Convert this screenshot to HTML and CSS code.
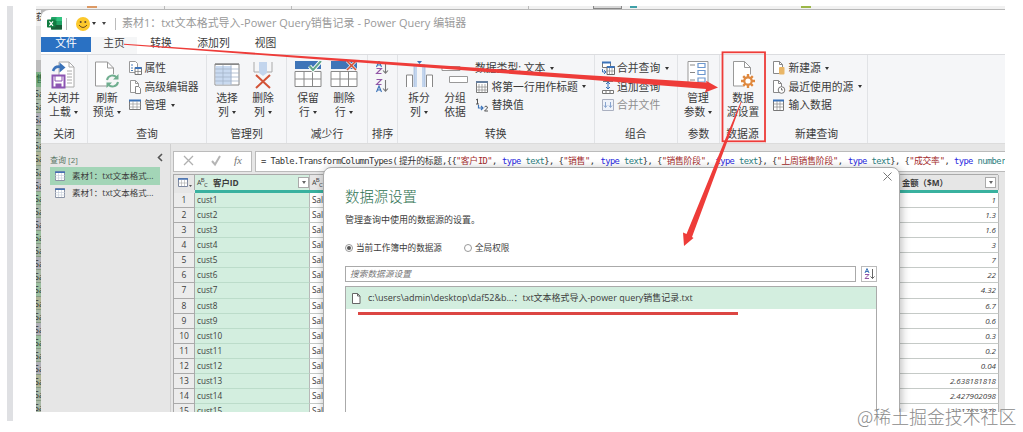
FILE: index.html
```html
<!DOCTYPE html>
<html>
<head>
<meta charset="utf-8">
<title>Power Query 编辑器</title>
<link rel="stylesheet" href="styles.css">
</head>
<body>
<div class="page">
<div class="quote-bar"></div>
<div class="shot">
  <div class="backdrop-top"><i class="tick t1"></i><i class="tick t2"></i><i class="tick t3"></i><i class="tick t4"></i><i class="tick t5"></i><i class="tick t6"></i><i class="tick t7"></i></div>
  <div class="lower">
  <div class="backdrop-left">
    <div class="bl-head">获</div><div class="bl-gap"></div><div class="bl-sel">售</div>
    <div class="cell">Sa</div><div class="cell">Sa</div><div class="cell a">Sa</div><div class="cell">Sa</div><div class="cell">Sa</div><div class="cell b">Sa</div><div class="cell">Sa</div><div class="cell a">Sa</div><div class="cell c">Sa</div><div class="cell">Sa</div><div class="cell a">Sa</div><div class="cell c">Sa</div><div class="cell">Sa</div><div class="cell a">Sa</div><div class="cell">Sa</div><div class="cell c">Sa</div><div class="cell b">Sa</div><div class="cell">Sa</div><div class="cell a">Sa</div><div class="cell c">Sa</div><div class="cell">Sa</div><div class="cell a">Sa</div><div class="cell b">Sa</div><div class="cell">Sa</div><div class="cell">Sa</div>
  </div>
  <div class="window">
    <div class="titlebar">
      <svg class="xl" width="15" height="14" viewBox="0 0 15 14"><rect x="4" y="0" width="11" height="12.5" rx="1" fill="#21a366"/><rect x="9.5" y="0" width="5.5" height="4" fill="#33c481"/><rect x="4" y="8" width="11" height="4.5" fill="#185c37"/><rect x="4" y="4" width="5.5" height="4" fill="#107c41"/><rect x="0" y="2.5" width="8.5" height="8" rx=".8" fill="#107c41"/><path d="M2.4 4.3l3.6 4.6M6 4.3L2.4 8.900" stroke="#fff" stroke-width="1.2"/></svg>
      <i class="bar"></i>
      <svg class="smile" width="14" height="14" viewBox="0 0 14 14"><circle cx="7" cy="7" r="7" fill="#fcc82b"/><circle cx="4.700" cy="5" r="1" fill="#5a4632"/><circle cx="9.300" cy="5" r="1" fill="#5a4632"/><path d="M3 8Q7 13 11 8" fill="none" stroke="#6b4b20" stroke-width="1"/></svg>
      <i class="caret"></i><i class="caret under"></i><i class="bar second"></i>
      <span class="title">素材1：txt文本格式导入-Power Query销售记录 - Power Query 编辑器</span>
    </div>
    <div class="tabs"><span class="tab file">文件</span><span class="tab active">主页</span><span class="tab w57">转换</span><span class="tab w50">添加列</span><span class="tab w55">视图</span></div>
    <div class="ribbon">
      <div class="group g-close"><div class="body">
        <div class="big"><svg width="26" height="28" viewBox="0 0 26 28"><path d="M8 1h10l5 5v20H8z" fill="#fff" stroke="#aaa"/><path d="M18 1v5h5M16 10h5M16 13h5M16 16h5M16 19h5M16 22h5" fill="none" stroke="#aaa"/><path d="M2 10Q4 4.500 10 6" fill="none" stroke="#3b73b9" stroke-width="2.600"/><path d="M8.500 1.500l6 5-6 5z" fill="#3b73b9"/><path d="M1.500 14.500h12v12h-12z" fill="#fff" stroke="#8c55b2" stroke-width="2"/><path d="M4 15h7v5H4z" fill="#fff" stroke="#8c55b2"/><path d="M4.500 22.500h6v4h-6z" fill="#8c55b2"/></svg><span>关闭并</span><span>上载<i class="caret"></i></span></div>
      </div><div class="label">关闭</div></div>
      <div class="group g-query"><div class="body">
        <div class="big"><svg width="26" height="28" viewBox="0 0 26 28"><path d="M1.500 1h12l6 6v18h-18z" fill="#fff" stroke="#999"/><path d="M13.500 1v6h6" fill="none" stroke="#999"/><circle cx="18.500" cy="20" r="7" fill="#f5f6f7"/><path d="M13 19a5.500 5.500 0 0 1 10-2M24 21a5.500 5.500 0 0 1-10 2" fill="none" stroke="#6fae8f" stroke-width="2"/><path d="M24.500 13v5.500h-5.500zM12.500 27v-5.500H18z" fill="#6fae8f"/></svg><span>刷新</span><span>预览<i class="caret"></i></span></div>
        <div class="smalls">
          <div class="small"><svg width="14" height="14" viewBox="0 0 14 14"><path d="M1.500.5h6l2 2v9h-8z" fill="#fff" stroke="#999"/><path d="M3 4h2M3 7h2M3 9.500h2" stroke="#4c7fba"/><path d="M7 6.500h6.500v7H7z" fill="#fff" stroke="#777"/><path d="M7 7h6.500" stroke="#3b73b9" stroke-width="2"/><path d="M7 10.500h6.500M10 8v5" stroke="#777" stroke-width=".7"/></svg>属性</div>
          <div class="small"><svg width="14" height="14" viewBox="0 0 14 14"><path d="M2.500.5h5l3 3v9h-8z" fill="#fff" stroke="#999"/><path d="M7.500.5v3h3" fill="none" stroke="#999"/><path d="M7.500 6.500h3l2 2v5h-5z" fill="#fff" stroke="#888"/></svg>高级编辑器</div>
          <div class="small"><svg width="14" height="14" viewBox="0 0 14 14"><path d="M1.500 2.500h11v9h-11z" fill="#fff" stroke="#777"/><path d="M1 2.500h12" stroke="#3b73b9" stroke-width="2"/><path d="M5 3v8M9 3v8M1 6h12M1 9h12" stroke="#999" stroke-width=".7"/></svg>管理<i class="caret"></i></div>
        </div>
      </div><div class="label">查询</div></div>
      <div class="group g-cols"><div class="body">
        <div class="big"><svg width="26" height="28" viewBox="0 0 26 28"><path d="M1 3h24v21H1z" fill="#fff" stroke="#888"/><path d="M1.500 5h16v18.500h-16z" fill="#c9daf0"/><path d="M1 3.200h24" stroke="#888" stroke-width="1.500"/><path d="M9 4v20M17 4v20M1 8h24M1 12h24M1 16h24M1 20h24" stroke="#a4b4c8" stroke-width=".8"/></svg><span>选择</span><span>列<i class="caret"></i></span></div>
        <div class="big"><svg width="26" height="28" viewBox="0 0 26 28"><path d="M4 1v10h5M22 1v10h-5" fill="none" stroke="#aaa"/><path d="M9 1h8v11l-4 3-4-3z" fill="#c3d5ed"/><path d="M6 14l14 13M20 14L6 27" stroke="#d35438" stroke-width="2"/></svg><span>删除</span><span>列<i class="caret"></i></span></div>
      </div><div class="label">管理列</div></div>
      <div class="group g-rows"><div class="body">
        <div class="big"><svg width="28" height="28" viewBox="0 0 28 28"><path d="M1 0h26v8H1z" fill="#3f75b8"/><path d="M1 10.500h26v15H1zM1 18h26M10 10.500v15M18.500 10.500v15" fill="#fff" stroke="#888"/><path d="M15.500 5l3.500 4L27 0" fill="none" stroke="#fff" stroke-width="4"/><path d="M15.500 5l3.500 4L27 0" fill="none" stroke="#63a88a" stroke-width="2"/></svg><span>保留</span><span>行<i class="caret"></i></span></div>
        <div class="big"><svg width="28" height="28" viewBox="0 0 28 28"><path d="M1 0h26v8H1z" fill="#3f75b8"/><path d="M1 10.500h26v15H1zM1 18h26M10 10.500v15M18.500 10.500v15" fill="#fff" stroke="#888"/><path d="M17 0l9 9M26 0l-9 9" stroke="#edf1f6" stroke-width="3"/><path d="M17 0l9 9M26 0l-9 9" stroke="#d35438" stroke-width="1.600"/></svg><span>删除</span><span>行<i class="caret"></i></span></div>
      </div><div class="label">减少行</div></div>
      <div class="group g-sort"><div class="body">
        <svg width="14" height="34" viewBox="0 0 14 34" fill="none"><g stroke-width="1.100"><path d="M1.500 6L4 0l2.500 6M2.300 4h3.400" stroke="#3b73b9"/><path d="M1.500 7.500h5l-5 5h5" stroke="#9256a6"/><path d="M1.500 18.500h5l-5 5h5" stroke="#9256a6"/><path d="M1.500 31L4 25l2.500 6M2.300 29h3.400" stroke="#3b73b9"/><path d="M10.500 1v11M8 9.500l2.500 2.700L13 9.500M10.500 19v11M8 27.500l2.500 2.700 2.500-2.700" stroke="#777"/></g></svg>
      </div><div class="label">排序</div></div>
      <div class="group g-trans"><div class="body">
        <div class="big"><svg width="28" height="28" viewBox="0 0 28 28"><path d="M9 3h3v23H9zM17 3h3v23h-3z" fill="#c3d5ed"/><path d="M1.500 26V14h6v12M21.500 26V14h6v12" fill="#fff" stroke="#888"/><path d="M9 4v22M20 4v22" stroke="#9bb6da" stroke-width=".7"/><path d="M12 0h5l-2.500 3z" fill="#3b73b9"/></svg><span>拆分</span><span>列<i class="caret"></i></span></div>
        <div class="big"><svg width="28" height="28" viewBox="0 0 28 28"><path d="M1 5.500h18v4H1zM8.500 15.500h18v6h-18z" fill="#fff" stroke="#999"/></svg><span>分组</span><span>依据</span></div>
        <div class="smalls">
          <div class="small plain">数据类型: 文本<i class="caret"></i></div>
          <div class="small"><svg width="14" height="14" viewBox="0 0 14 14"><path d="M1.500 1.500h11v11h-11z" fill="#fff" stroke="#777"/><path d="M1 2h12" stroke="#667f9f" stroke-width="2"/><path d="M4 4v9M7 4v9M10 4v9M1 7h12M1 10h12" stroke="#888" stroke-width=".7"/></svg>将第一行用作标题<i class="caret"></i></div>
          <div class="small"><svg width="14" height="14" viewBox="0 0 14 14" fill="none"><path d="M1 2l1.500-1v5M1 6h3" stroke="#555"/><path d="M3.500 7v3h4M6 8l2 2-2 2" stroke="#3b73b9" stroke-width="1.200"/><path d="M9.500 9q1.500-2 3 0 0 1.500-3 4h3.500" stroke="#555"/></svg>替换值</div>
        </div>
      </div><div class="label">转换</div></div>
      <div class="group g-comb"><div class="body"><div class="smalls">
          <div class="small"><svg width="14" height="14" viewBox="0 0 14 14"><path d="M1.500 1.500h8v5h-8z" fill="#fff" stroke="#777"/><path d="M1 1.500h9" stroke="#3b73b9" stroke-width="2"/><path d="M6 5.500h7.500v8H6z" fill="#fff" stroke="#666"/><path d="M6 6h7.500" stroke="#3b73b9" stroke-width="2"/><path d="M8.500 7v6M11 7v6M6 10h7" stroke="#888" stroke-width=".7"/><path d="M1.500 8v3h3M3 9l2 2-2 2" fill="none" stroke="#3b73b9"/></svg>合并查询<i class="caret"></i></div>
          <div class="small"><svg width="14" height="14" viewBox="0 0 14 14"><path d="M2 1.500h10M1.500 10.500h11v3h-11zM5 10v3M9 10v3" fill="#fff" stroke="#777"/><path d="M7 2v7M5 4l2-2 2 2M5 7l2 2 2-2" fill="none" stroke="#3b73b9"/></svg>追加查询</div>
          <div class="small disabled"><svg width="14" height="14" viewBox="0 0 14 14"><path d="M1.500 1.500h11v11h-11z" fill="#eef2fa" stroke="#aab0c0"/><path d="M4.500 4v5M9.500 4v5M3 7.500l1.500 2L6 7.500M8 7.500l1.500 2 1.500-2" fill="none" stroke="#87a4cf"/></svg>合并文件</div>
      </div></div><div class="label">组合</div></div>
      <div class="group g-param"><div class="body">
        <div class="big"><svg width="22" height="28" viewBox="0 0 22 28"><path d="M1 .5h20v24H1z" fill="#fff" stroke="#999"/><path d="M3 4h5M3 11.500h5M3 19h5" stroke="#888"/><path d="M11 2.500h7v4h-7zM11 9.500h7v4h-7zM11 17h7v4h-7z" fill="#fff" stroke="#6d98cf" stroke-width="1.200"/></svg><span>管理</span><span>参数<i class="caret"></i></span></div>
      </div><div class="label">参数</div></div>
      <div class="group g-source"><div class="body">
        <div class="big"><svg width="24" height="28" viewBox="0 0 24 28"><path d="M2.500.5h11l6 6V25h-17z" fill="#fff" stroke="#999"/><path d="M13.500.5v6h6" fill="none" stroke="#999"/><circle cx="17" cy="20" r="7" fill="#fff"/><path d="M17 13v14M10 20h14M12.200 15.200l9.600 9.600M21.800 15.200l-9.600 9.600" stroke="#df8940" stroke-width="2.400"/><circle cx="17" cy="20" r="3.700" fill="#fff" stroke="#df8940" stroke-width="2.200"/></svg><span>数据</span><span>源设置</span></div>
      </div><div class="label">数据源</div></div>
      <div class="group g-new"><div class="body"><div class="smalls">
          <div class="small"><svg width="14" height="14" viewBox="0 0 14 14"><path d="M1.500.5h6l3 3v9h-9z" fill="#fff" stroke="#888"/><path d="M7.500.5v3h3" fill="none" stroke="#888"/><rect x="7" y="6" width="5.500" height="7.500" rx="1" fill="#e9b667"/></svg>新建源<i class="caret"></i></div>
          <div class="small"><svg width="14" height="14" viewBox="0 0 14 14"><path d="M1.500.5h5l3 3v9h-8z" fill="#fff" stroke="#888"/><path d="M6.500.5v3h3" fill="none" stroke="#888"/><circle cx="9.500" cy="10" r="3.300" fill="#fff" stroke="#777"/><path d="M9.500 8v2h1.500" fill="none" stroke="#777"/></svg>最近使用的源<i class="caret"></i></div>
          <div class="small"><svg width="14" height="14" viewBox="0 0 14 14"><path d="M1.500 2.500h10v10h-10z" fill="#fff" stroke="#777"/><path d="M1 2.500h11" stroke="#3b73b9" stroke-width="2"/><path d="M5 3v9M8 3v9M1 6h11M1 9h11" stroke="#888" stroke-width=".7"/></svg>输入数据</div>
      </div></div><div class="label">新建查询</div></div>
    </div>
    <div class="work">
      <div class="queries">
        <div class="q-head"><span>查询 [2]</span><svg width="6" height="9" viewBox="0 0 6 9"><path d="M5 1L1.500 4.500 5 8" fill="none" stroke="#555" stroke-width="1.600"/></svg></div>
        <div class="q-item on"><svg width="10" height="10" viewBox="0 0 10 10"><path d="M.5.5h9v9h-9z" fill="#fff" stroke="#8a93a5"/><path d="M0 1.200h10" stroke="#4472b5" stroke-width="1.500"/><path d="M3.500 2v7M6.500 2v7M0 4.500h10M0 7h10" stroke="#c4ccd8" stroke-width=".6"/></svg>素材1：txt文本格式...</div>
        <div class="q-item"><svg width="10" height="10" viewBox="0 0 10 10"><path d="M.5.5h9v9h-9z" fill="#fff" stroke="#8a93a5"/><path d="M0 1.200h10" stroke="#4472b5" stroke-width="1.500"/><path d="M3.500 2v7M6.500 2v7M0 4.500h10M0 7h10" stroke="#c4ccd8" stroke-width=".6"/></svg>素材1：txt文本格式...</div>
      </div>
      <div class="main">
        <div class="formula-row">
          <div class="fx-box"><svg width="78" height="18" viewBox="0 0 78 18" fill="none"><path d="M10 4l9 9M19 4l-9 9" stroke="#b0b0b0" stroke-width="1.300"/><path d="M38 9l3 3.500L46 4" stroke="#b5b5b5" stroke-width="2"/></svg><i class="fx">fx</i></div>
          <div class="formula"><span class="s0">= Table.TransformColumnTypes(</span><span class="s1"><b>提升的标题</b>,{{</span><span class="s2 str">"<b>客户</b>ID"<em>,</em></span><span class="ty"><u>type</u> text<em>},</em></span><span class="s3 str"><em>{</em>"<b>销售</b>"<em>,</em></span><span class="ty"><u>type</u> text<em>},</em></span><span class="s4 str"><em>{</em>"<b>销售阶段</b>"<em>,</em></span><span class="ty"><u>type</u> text<em>},</em></span><span class="s5 str"><em>{</em>"<b>上周销售阶段</b>"<em>,</em></span><span class="ty"><u>type</u> text<em>},</em></span><span class="s6 str"><em>{</em>"<b>成交率</b>"<em>,</em></span><span class="ty"><u>type</u> number</span></div>
        </div>
        <div class="table">
          <div class="row head"><div class="n"><svg width="14" height="10" viewBox="0 0 14 10"><path d="M.5.5h9v8h-9z" fill="#fff" stroke="#7d88a0"/><path d="M0 1h10" stroke="#4472b5" stroke-width="1.500"/><path d="M3.500 2v6M6.500 2v6M0 5h10" stroke="#aaa" stroke-width=".6"/><path d="M11 7h3l-1.500 2z" fill="#555"/></svg></div><div class="id"><span class="abc">A<sup>B</sup><sub>C</sub></span>客户ID<i class="drop"></i></div><div class="sale"><span class="abc">A<sup>B</sup><sub>C</sub></span></div><div class="amt">金额（$M）<i class="drop"></i></div></div>
          <div class="teal"></div>
          <div class="row"><div class="n">1</div><div class="id">cust1</div><div class="sale">Sales</div><div class="amt">1</div></div>
          <div class="row"><div class="n">2</div><div class="id">cust2</div><div class="sale">Sales</div><div class="amt">1.3</div></div>
          <div class="row"><div class="n">3</div><div class="id">cust3</div><div class="sale">Sales</div><div class="amt">1.6</div></div>
          <div class="row"><div class="n">4</div><div class="id">cust4</div><div class="sale">Sales</div><div class="amt">3</div></div>
          <div class="row"><div class="n">5</div><div class="id">cust5</div><div class="sale">Sales</div><div class="amt">7</div></div>
          <div class="row"><div class="n">6</div><div class="id">cust6</div><div class="sale">Sales</div><div class="amt">22</div></div>
          <div class="row"><div class="n">7</div><div class="id">cust7</div><div class="sale">Sales</div><div class="amt">4.32</div></div>
          <div class="row"><div class="n">8</div><div class="id">cust8</div><div class="sale">Sales</div><div class="amt">6.7</div></div>
          <div class="row"><div class="n">9</div><div class="id">cust9</div><div class="sale">Sales</div><div class="amt">0.6</div></div>
          <div class="row"><div class="n">10</div><div class="id">cust10</div><div class="sale">Sales</div><div class="amt">0.3</div></div>
          <div class="row"><div class="n">11</div><div class="id">cust11</div><div class="sale">Sales</div><div class="amt">0.2</div></div>
          <div class="row"><div class="n">12</div><div class="id">cust12</div><div class="sale">Sales</div><div class="amt">0.04</div></div>
          <div class="row"><div class="n">13</div><div class="id">cust13</div><div class="sale">Sales</div><div class="amt">2.638181818</div></div>
          <div class="row"><div class="n">14</div><div class="id">cust14</div><div class="sale">Sales</div><div class="amt">2.427902098</div></div>
          <div class="row"><div class="n">15</div><div class="id">cust15</div><div class="sale">Sales</div><div class="amt">2.217622378</div></div>
        </div>
      </div>
    </div>
  </div>
  </div>
  <div class="dialog">
    <svg class="close" width="9" height="9" viewBox="0 0 9 9"><path d="M.5.5l8 8M8.500.5l-8 8" stroke="#777"/></svg>
    <h1>数据源设置</h1>
    <p>管理查询中使用的数据源的设置。</p>
    <div class="radios"><span><i class="radio on"></i>当前工作簿中的数据源</span><span><i class="radio"></i>全局权限</span></div>
    <div class="search"><div class="input">搜索数据源设置</div><div class="sort"><svg width="11" height="12" viewBox="0 0 11 12" fill="none"><path d="M1 5L3 .5 5 5M1.700 3.500h2.600" stroke="#3b73b9"/><path d="M1 6.500h4l-4 4h4" stroke="#9256a6"/><path d="M8.500 1v9.500M6.500 8.500l2 2 2-2" stroke="#666"/></svg></div></div>
    <div class="list"><div class="item"><svg width="9" height="11" viewBox="0 0 9 11"><path d="M.5.5h5l2.500 2.500v7.500H.5z" fill="#fff" stroke="#666"/><path d="M5.500.5V3H8" fill="none" stroke="#666"/></svg><span>c:\users\admin\desktop\daf52&amp;b...：txt文本格式导入-power query销售记录.txt</span></div></div>
  </div>
</div>
<svg class="marks" width="1023" height="432" viewBox="0 0 1023 432"><path d="M124 43.700L320 57.200 580 74.700 706.500 82.500 706 80.800 718 87.500 705 92.500 706 89 580 79 320 59.600 124 44.700z" fill="#ee3c39"/><rect x="722.500" y="52.300" width="42.500" height="89" fill="none" stroke="#ee3c39" stroke-width="1.800"/><path d="M741.500 102L727.500 141 692 237 693.500 238 684 246 683 232.500 686.500 234 724.500 141 740.700 102z" fill="#ee3c39"/><path d="M358 313.500H738" stroke="#dc4643" stroke-width="3"/></svg>
<div class="watermark">@稀土掘金技术社区</div>
</div>
</body>
</html>
```
FILE: styles.css
```css
* { box-sizing: border-box; }
body { margin: 0; background: #fff; }
.page { position: relative; width: 1023px; height: 432px; overflow: hidden; display: flex; padding: 6px 0 0 7px; font: 10.8px/14.5px "Open Sans", "Noto Sans CJK SC", sans-serif; color: #3c3c3c; }
.page svg { flex: none; }
.quote-bar { width: 6px; height: 415px; background: #dfe0e3; margin-right: 23px; }
.shot { position: relative; width: 969px; height: 406px; overflow: hidden; display: flex; flex-direction: column; }
.backdrop-top { height: 4px; flex: none; background: #f1f1f1; border-bottom: 1px solid #b8b8b8; display: flex; }
.tick { width: 1px; height: 3px; background: #bbb; }
.t1 { margin-left: 51px; width: 10px; background: #dd9a65; height: 2px; }
.t2 { margin-left: 67px; }
.t3 { margin-left: 126px; }
.t4 { margin-left: 236px; }
.t5 { margin-left: 64px; width: 29px; background: #d7d7d7; border: 1px solid #888; border-top: 0; }
.t6 { margin-left: 8px; width: 7px; background: #3fa0a8; height: 2px; }
.t7 { margin-left: 164px; width: 10px; background: #9cb748; height: 2px; }
.lower { display: flex; flex: 1; min-height: 0; background: #b9b9b9; }
.backdrop-left { width: 5px; flex: none; overflow: hidden; font-size: 9px; line-height: 13px; color: #333; background: #a8c3a7; }
.bl-head { height: 16px; background: #f0f0f0; }
.bl-gap { height: 46px; background: linear-gradient(#e3e3e3 34px, #bcbcbc 34px); }
.bl-sel { height: 15px; background: #7cae85; color: #27643c; }
.cell { height: 13.1px; background: #a9b8a6; border-bottom: 1px solid #859a83; text-indent: -2px; }
.cell.a { background: #b0b0b6; }
.cell.b { background: #b0b596; }
.cell.c { background: #9cbf9f; }
.window { width: 964px; background: #fff; display: flex; flex-direction: column; border-radius: 8px 0 0 0; overflow: hidden; }
.titlebar { height: 27px; flex: none; display: flex; align-items: center; padding-left: 6px; color: #999; }
.bar { width: 1px; height: 12px; background: #bbb; margin-left: 4px; }
.smile { margin-left: 9px; }
.caret { display: inline-block; border: 2.3px solid transparent; border-top: 3px solid #333; border-bottom: 0; vertical-align: 2.500px; margin-left: 3px; }
.smile + .caret { margin-left: 2px; }
.under { margin-left: 6px; border-top-color: #444; }
.bar.second { margin-left: 9px; }
.title { margin-left: 6px; font-size: 10.97px; white-space: nowrap; }
.tabs { height: 17px; flex: none; display: flex; line-height: 12px; }
.tab { text-align: center; height: 17px; white-space: nowrap; }
.tab.file { width: 50px; height: 15px; background: #2a71c3; color: #fff; }
.tab.active { width: 46px; background: #f5f6f7; }
.w57 { width: 48px; }
.w50 { width: 57px; }
.w55 { width: 47px; }
.ribbon { height: 90px; flex: none; background: #f5f6f8; border-top: 1px solid #dcdde0; border-bottom: 1px solid #dcdcdc; display: grid; grid-template-columns: 47px 119px 80px 81px 30px 196.500px 83.500px 42px 46px 102px; }
.group { border-right: 1px solid #e1e3e6; display: flex; flex-direction: column; white-space: nowrap; min-width: 0; }
.body { display: flex; height: 71px; padding-top: 6px; }
.label { text-align: center; line-height: 16px; }
.big { width: 36px; flex: none; display: flex; flex-direction: column; align-items: center; line-height: 14.300px; }
.big svg { margin-bottom: 2px; }
.g-close .body { padding-left: 4.500px; }
.g-query .body { padding-left: 1px; }
.g-query .smalls { margin-left: 3px; }
.g-cols .body, .g-param .body { padding-left: 2px; }
.g-rows .body { padding-left: 3px; }
.g-sort .body { padding-left: 7px; }
.g-trans .body { padding-left: 3px; }
.g-trans .smalls { margin-left: 2px; }
.g-comb .body { padding-left: 6px; }
.g-source .body { padding-left: 5px; }
.g-new .body { padding-left: 6px; }
.small { height: 18.600px; display: flex; align-items: center; gap: 2.500px; margin-top: 0; }
.smalls { margin-top: -2px; }
.small .caret { margin-left: 2px; }
.disabled { color: #8f8f8f; }
.work { display: flex; flex: 1; min-height: 0; background: #e6e6e6; }
.queries { width: 130px; flex: none; padding: 7px 10px 0 9px; border-right: 1px solid #cfcfcf; font-size: 8.500px; }
.q-head { display: flex; justify-content: space-between; align-items: center; height: 16px; font-size: 8px; color: #587565; padding-top: 2px; margin-right: -3px; }
.q-head svg { margin-top: -5px; }
.q-item { height: 17.500px; display: flex; align-items: center; gap: 7px; padding-left: 5px; white-space: nowrap; color: #3d3d3d; }
.q-item.on { background: #a3d5b7; }
.main { flex: 1; min-width: 0; padding: 7px 0 0 2px; border-left: 0; }
.formula-row { display: flex; gap: 3px; height: 21px; }
.fx-box { width: 79px; flex: none; background: #fff; border: 1px solid #bbb; display: flex; }
.fx { font: italic 11px/17px "Liberation Serif", serif; color: #777; margin-left: -18px; }
.formula { flex: 1; min-width: 0; overflow: hidden; background: #fff; border: 1px solid #bbb; border-right: 0; padding-left: 5px; white-space: pre; font: 8.800px/18px "DejaVu Sans Mono", "Noto Sans CJK SC", monospace; letter-spacing: -.6px; color: #333; display: flex; }
.formula span { flex: none; }
.formula b { font: 8.800px/18px "Noto Sans CJK SC", sans-serif; letter-spacing: -.2px; }
.formula em { font-style: normal; color: #333; }
.formula u { text-decoration: none; color: #2a2adf; }
.s0 { width: 138px; }
.s1 { width: 57px; }
.s2 { width: 46px; }
.ty { width: 56.500px; color: #2b8080; }
.s3 { width: 42px; }
.s4 { width: 58.500px; }
.s5 { width: 76px; }
.s6 { width: 49.500px; }
.str { color: #a32b2b; }
.table { width: 825px; margin-top: 2px; border-left: 1px solid #aaa; font-size: 8.200px; }
.row { display: grid; grid-template-columns: 21px 115px 589px 100px; height: 15.080px; line-height: 14px; }
.row > div { border-bottom: 1px solid #c5cac7; border-right: 1px solid #b8b8b8; overflow: hidden; white-space: nowrap; }
.row .n { text-align: center; background: #ececec; border-bottom-color: #aaa; border-right-color: #aaa; font-size: 8.500px; }
.row .id { background: #d3eedf; padding-left: 2px; border-bottom-color: #bcdcca; }
.row .sale, .row .amt { background: #fff; padding-left: 2px; }
.row .amt { text-align: right; font-style: italic; padding-right: 2px; font-size: 8px; }
.head.row { height: 16px; border-top: 1px solid #aaa; font-weight: bold; font-size: 8.400px; line-height: 15px; }
.head.row > div { background: #e6e6e6; display: flex; align-items: center; border-bottom: 0; }
.head.row .id { background: #d3eedf; }
.head.row .amt { font-style: normal; padding-left: 3px; font-size: 8.300px; }
.head .n svg { margin-left: 4px; }
.teal { height: 3px; background: #39b19f; margin-left: 21px; border-top: 0; }
.abc { font-size: 7px; letter-spacing: -.7px; margin-right: 6px; font-weight: normal; }
.abc sup, .abc sub { font-size: 6px; line-height: 0; }
.drop { width: 11px; height: 11px; flex: none; margin-left: auto; background: #fff; border: 1px solid #aaa; display: grid; place-items: center; }
.drop::after { content: ""; border: 2.500px solid transparent; border-top: 3px solid #666; border-bottom: 0; }
.dialog { position: absolute; left: 287px; top: 161px; width: 577px; height: 260px; border-radius: 8px; background: #fff; border: 1px solid #aaa; box-shadow: 1px 2px 10px rgba(0,0,0,.3); padding: 16px 20px 0 21px; font-size: 9px; }
.close { position: absolute; right: 7px; top: 4px; }
.dialog h1 { margin: 0; font: 300 14.400px/24px "Noto Sans CJK SC", sans-serif; color: #2e7250; }
.dialog p { margin: 4px 0 0; line-height: 16px; }
.radios { display: flex; gap: 22px; margin-top: 12px; font-size: 8.600px; line-height: 16px; }
.radios span { display: flex; align-items: center; gap: 3px; }
.radio { width: 8px; height: 8px; border: 1px solid #999; border-radius: 50%; display: grid; place-items: center; }
.radio.on::after { content: ""; width: 4px; height: 4px; border-radius: 50%; background: #555; }
.search { display: flex; gap: 5px; margin-top: 10px; }
.input { width: 511px; height: 16px; border: 1px solid #aaa; font-style: italic; color: #777; font-size: 8.700px; padding-left: 4px; line-height: 14px; }
.sort { width: 16px; height: 16px; border: 1px solid #bbb; display: grid; place-items: center; }
.list { width: 532px; height: 150px; margin-top: 4px; border: 1px solid #aaa; }
.item { height: 22px; background: #d3eedf; display: flex; align-items: center; gap: 7px; padding-left: 6px; white-space: nowrap; font-size: 8.970px; }
.marks { position: absolute; left: 0; top: 0; }
.watermark { position: absolute; left: 857px; top: 404px; font: 300 17.900px/24px "Noto Sans CJK SC", sans-serif; color: #8a8a8a; white-space: nowrap; }
```
